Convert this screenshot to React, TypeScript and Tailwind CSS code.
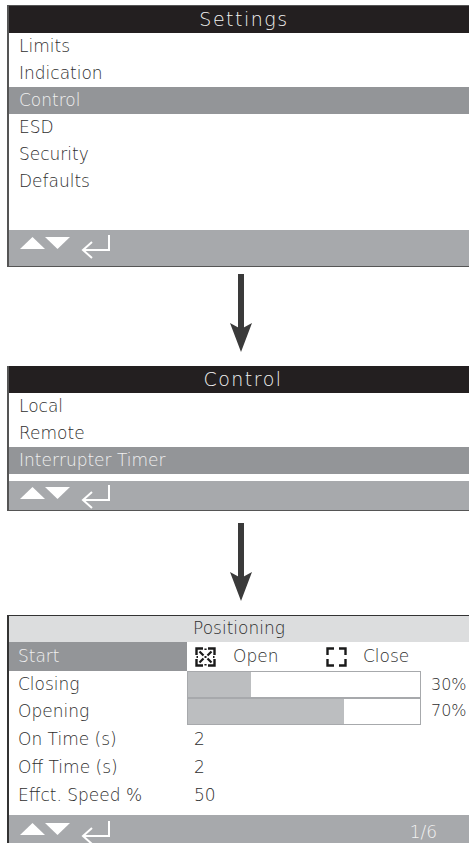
import React from "react";

const ink = "text-[#2e2e2e]";

function NavIcons() {
  return (
    <svg width="92" height="24" viewBox="0 0 92 24" className="block">
      <polygon points="0,14 25,14 12.5,2" fill="#ffffff" />
      <polygon points="25,2 50,2 37.5,14" fill="#ffffff" />
      <path d="M89 0 V15 H63 M72 7 L63 15 L72 23" fill="none" stroke="#ffffff" strokeWidth="2" />
    </svg>
  );
}

function Footer({ h, pt, right }: { h: string; pt: string; right?: string }) {
  return (
    <div className={`${h} ${pt} bg-[#a7a9ac] pl-[11px] flex items-start justify-between`}>
      <NavIcons />
      {right && <span className="pr-[32px] self-center text-[17px] text-[#f2f2f2]">{right}</span>}
    </div>
  );
}

function DownArrow({ h }: { h: string }) {
  return (
    <div className={`${h} flex justify-center pl-[13px]`}>
      <svg width="22" height="78" viewBox="0 0 22 78" className="block">
        <rect x="8" y="0" width="6" height="56" fill="#3a3a3a" />
        <polygon points="0,49 11,55 22,49 11,78" fill="#3a3a3a" />
      </svg>
    </div>
  );
}

function MenuRow({ label, active }: { label: string; active?: boolean }) {
  return (
    <div
      className={`h-[27px] flex items-center pl-[10px] text-[17px] ${
        active ? "bg-[#939598] text-[#f0f0f0]" : ink
      }`}
    >
      {label}
    </div>
  );
}

function CheckBox({ checked }: { checked?: boolean }) {
  return (
    <svg width="21" height="20" viewBox="0 0 21 20" className="block">
      <path
        d="M1.5 8 V1.5 H8 M13 1.5 H19.5 V8 M19.5 12 V18.5 H13 M8 18.5 H1.5 V12"
        fill="none"
        stroke="#1a1a1a"
        strokeWidth="2.4"
      />
      {checked && (
        <>
          <path
            d="M4.5 4.5 L8.5 8.5 M16.5 4.5 L12.5 8.5 M4.5 15.5 L8.5 11.5 M16.5 15.5 L12.5 11.5 M10.5 1.5 V3 M10.5 17 V18.5 M1.5 10 H3 M18 10 H19.5"
            fill="none"
            stroke="#1a1a1a"
            strokeWidth="2.2"
          />
          <rect x="9.5" y="9" width="2" height="2" fill="#1a1a1a" />
        </>
      )}
    </svg>
  );
}

function Bar({ fill, pct }: { fill: string; pct: string }) {
  return (
    <div className="flex items-center">
      <div className="w-[234px] h-[27px] border border-[#a7a9ac] bg-white flex">
        <div className={`${fill} h-full bg-[#bcbec0]`} />
      </div>
      <span className={`pl-[10px] text-[16px] ${ink}`}>{pct}</span>
    </div>
  );
}

function ParamRow({ label, h, children }: { label: string; h: string; children?: React.ReactNode }) {
  return (
    <div className={`${h} flex`}>
      <div className={`w-[178px] flex items-center pl-[9px] text-[17px] ${ink}`}>{label}</div>
      <div className="flex-1 flex items-center">{children}</div>
    </div>
  );
}

export default function App() {
  return (
    <div className="w-[469px] h-[843px] overflow-hidden bg-white pt-[5px] font-['DejaVu_Sans',sans-serif] font-extralight">
      {/* Settings menu */}
      <div className="ml-[7px] border-l-2 border-t border-b border-[#555]">
        <div className="h-[27px] bg-[#231f20] flex items-center justify-center pl-[10px] text-[19px] tracking-[1.5px] text-[#f2f2f2]">
          Settings
        </div>
        <MenuRow label="Limits" />
        <MenuRow label="Indication" />
        <MenuRow label="Control" active />
        <MenuRow label="ESD" />
        <MenuRow label="Security" />
        <MenuRow label="Defaults" />
        <div className="h-[35px]" />
        <Footer h="h-[36px]" pt="pt-[5px]" />
      </div>

      <div className="h-[99px] pt-[7px]">
        <DownArrow h="h-[92px]" />
      </div>

      {/* Control menu */}
      <div className="ml-[7px] border-l-2 border-b border-[#555]">
        <div className="h-[27px] bg-[#231f20] flex items-center justify-center pl-[8px] text-[19px] tracking-[1.5px] text-[#f2f2f2]">
          Control
        </div>
        <MenuRow label="Local" />
        <MenuRow label="Remote" />
        <MenuRow label="Interrupter Timer" active />
        <div className="h-[7px]" />
        <Footer h="h-[29px]" pt="pt-[4px]" />
      </div>

      <div className="h-[104px] pt-[12px]">
        <DownArrow h="h-[92px]" />
      </div>

      {/* Positioning parameters */}
      <div className="ml-[7px] border-l-2 border-t border-[#333]">
        <div className={`h-[26px] bg-[#dcddde] flex items-center justify-center text-[17px] ${ink}`}>
          Positioning
        </div>
        <div className="h-[29px] flex">
          <div className="w-[178px] bg-[#939598] flex items-center pl-[9px] text-[17px] text-[#f0f0f0]">
            Start
          </div>
          <div className={`flex-1 flex items-center pl-[8px] text-[17px] ${ink}`}>
            <CheckBox checked />
            <span className="pl-[17px] w-[110px]">Open</span>
            <CheckBox />
            <span className="pl-[16px]">Close</span>
          </div>
        </div>
        <ParamRow label="Closing" h="h-[27px]">
          <Bar fill="w-[63px]" pct="30%" />
        </ParamRow>
        <ParamRow label="Opening" h="h-[27px]">
          <div className="-mt-px">
            <Bar fill="w-[156px]" pct="70%" />
          </div>
        </ParamRow>
        <ParamRow label="On Time (s)" h="h-[29px]">
          <span className={`pl-[7px] text-[17px] ${ink}`}>2</span>
        </ParamRow>
        <ParamRow label="Off Time (s)" h="h-[28px]">
          <span className={`pl-[7px] text-[17px] ${ink}`}>2</span>
        </ParamRow>
        <ParamRow label="Effct. Speed %" h="h-[27px]">
          <span className={`pl-[7px] text-[17px] ${ink}`}>50</span>
        </ParamRow>
        <div className="h-[6px]" />
        <Footer h="h-[30px]" pt="pt-[6px]" right="1/6" />
      </div>
    </div>
  );
}
